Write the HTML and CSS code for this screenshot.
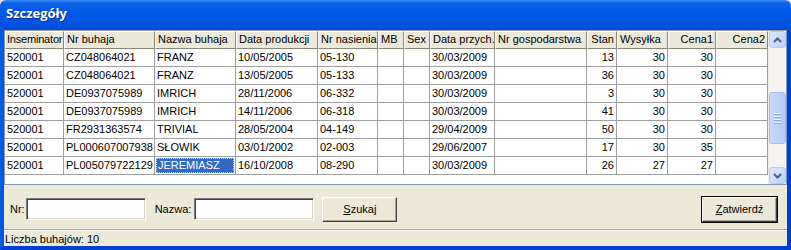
FILE: index.html
```html
<!DOCTYPE html>
<html>
<head>
<meta http-equiv="Content-Type" content="text/html;charset=UTF-8">
<link rel="stylesheet" href="styles.css">
</head>
<body>
<div class="window">
  <div class="titleBar"><span class="titleText">Szczegóły</span></div>
  <div class="client">
    <div class="gridWrapper">
      <div class="gridBody">
        <div class="gridRow headRow">
          <div class="cell firstHead">Inseminator</div>
          <div class="cell">Nr buhaja</div>
          <div class="cell">Nazwa buhaja</div>
          <div class="cell">Data produkcji</div>
          <div class="cell">Nr nasienia</div>
          <div class="cell">MB</div>
          <div class="cell">Sex</div>
          <div class="cell">Data przych.</div>
          <div class="cell">Nr gospodarstwa</div>
          <div class="cell num">Stan</div>
          <div class="cell">Wysyłka</div>
          <div class="cell num">Cena1</div>
          <div class="cell num">Cena2</div>
        </div>
        <div class="gridRow">
          <div class="cell">520001</div><div class="cell">CZ048064021</div><div class="cell">FRANZ</div><div class="cell">10/05/2005</div><div class="cell">05-130</div><div class="cell"></div><div class="cell"></div><div class="cell">30/03/2009</div><div class="cell"></div><div class="cell num">13</div><div class="cell num">30</div><div class="cell num">30</div><div class="cell"></div>
        </div>
        <div class="gridRow">
          <div class="cell">520001</div><div class="cell">CZ048064021</div><div class="cell">FRANZ</div><div class="cell">13/05/2005</div><div class="cell">05-133</div><div class="cell"></div><div class="cell"></div><div class="cell">30/03/2009</div><div class="cell"></div><div class="cell num">36</div><div class="cell num">30</div><div class="cell num">30</div><div class="cell"></div>
        </div>
        <div class="gridRow">
          <div class="cell">520001</div><div class="cell">DE0937075989</div><div class="cell">IMRICH</div><div class="cell">28/11/2006</div><div class="cell">06-332</div><div class="cell"></div><div class="cell"></div><div class="cell">30/03/2009</div><div class="cell"></div><div class="cell num">3</div><div class="cell num">30</div><div class="cell num">30</div><div class="cell"></div>
        </div>
        <div class="gridRow">
          <div class="cell">520001</div><div class="cell">DE0937075989</div><div class="cell">IMRICH</div><div class="cell">14/11/2006</div><div class="cell">06-318</div><div class="cell"></div><div class="cell"></div><div class="cell">30/03/2009</div><div class="cell"></div><div class="cell num">41</div><div class="cell num">30</div><div class="cell num">30</div><div class="cell"></div>
        </div>
        <div class="gridRow">
          <div class="cell">520001</div><div class="cell">FR2931363574</div><div class="cell">TRIVIAL</div><div class="cell">28/05/2004</div><div class="cell">04-149</div><div class="cell"></div><div class="cell"></div><div class="cell">29/04/2009</div><div class="cell"></div><div class="cell num">50</div><div class="cell num">30</div><div class="cell num">30</div><div class="cell"></div>
        </div>
        <div class="gridRow">
          <div class="cell">520001</div><div class="cell">PL000607007938</div><div class="cell">SŁOWIK</div><div class="cell">03/01/2002</div><div class="cell">02-003</div><div class="cell"></div><div class="cell"></div><div class="cell">29/06/2007</div><div class="cell"></div><div class="cell num">17</div><div class="cell num">30</div><div class="cell num">35</div><div class="cell"></div>
        </div>
        <div class="gridRow">
          <div class="cell">520001</div><div class="cell">PL005079722129</div><div class="cell selected"><span class="focusRect">JEREMIASZ</span></div><div class="cell">16/10/2008</div><div class="cell">08-290</div><div class="cell"></div><div class="cell"></div><div class="cell">30/03/2009</div><div class="cell"></div><div class="cell num">26</div><div class="cell num">27</div><div class="cell num">27</div><div class="cell"></div>
        </div>
      </div>
      <div class="scrollBar">
        <div class="sbButton">
          <svg width="9" height="6" viewBox="0 0 9 6"><path d="M1 5 L4.5 1.5 L8 5" fill="none" stroke="#4d6185" stroke-width="2"/></svg>
        </div>
        <div class="sbTrack">
          <div class="sbThumb">
            <div class="grip"></div><div class="grip"></div><div class="grip"></div><div class="grip"></div>
          </div>
        </div>
        <div class="sbButton">
          <svg width="9" height="6" viewBox="0 0 9 6"><path d="M1 1 L4.5 4.5 L8 1" fill="none" stroke="#4d6185" stroke-width="2"/></svg>
        </div>
      </div>
    </div>
    <div class="searchPanel">
      <span class="label">Nr:</span>
      <input class="textBox" type="text">
      <span class="label nameLabel">Nazwa:</span>
      <input class="textBox" type="text">
      <button class="btn searchBtn"><u>S</u>zukaj</button>
      <button class="btn defaultBtn"><u>Z</u>atwierdź</button>
    </div>
    <div class="statusBar">Liczba buhajów: 10</div>
  </div>
</div>
</body>
</html>
```

FILE: styles.css
```css
html, body{
  margin: 0;
  padding: 0;
  background: #ece9d8;
}
.window{
  width: 791px;
  height: 250px;
  display: flex;
  flex-direction: column;
  font-family: "Liberation Sans", Arial, sans-serif;
  font-size: 11px;
  color: #000;
}
.titleBar{
  height: 30px;
  box-sizing: border-box;
  padding: 4px 0 0 6px;
  background: linear-gradient(#3d8ff7 0, #0c63ea 3px, #0058e8 40%, #0053e0 85%, #004bd6 100%);
  border-radius: 6px 6px 0 0;
}
.titleText{
  font-family: "Open Sans", "DejaVu Sans", sans-serif;
  font-weight: bold;
  font-size: 13px;
  color: #fff;
  text-shadow: 1px 1px 0 #0a2a9a;
}
.client{
  flex: 1;
  display: flex;
  flex-direction: column;
  border-left: 4px solid #0058e6;
  border-right: 4px solid #0040d0;
  border-bottom: 4px solid #0040d0;
  background: #ece9d8;
}
.gridWrapper{
  height: 155px;
  box-sizing: border-box;
  display: flex;
  border: 1px solid #7f9db9;
  border-top-color: #a0a0a0;
  background: #fff;
}
.gridBody{
  flex: 1;
  overflow: hidden;
}
.gridRow{
  display: grid;
  grid-template-columns: 59px 91px 81px 82px 60px 26px 26px 65px 92px 30px 51px 48px 1fr;
  height: 18px;
}
.cell{
  box-sizing: border-box;
  border-right: 1px solid #a0a0a0;
  border-bottom: 1px solid #a0a0a0;
  padding: 2px 2px 0 2px;
  white-space: nowrap;
  overflow: hidden;
}
.num{
  text-align: right;
}
.headRow .cell{
  background: #ebe9da;
  border-right: 1px solid #8a8878;
  border-bottom: 1px solid #8a8878;
  border-top: 1px solid #fff;
  border-left: 1px solid #fff;
  padding-top: 1px;
}
.headRow .firstHead{
  padding-left: 1px;
  padding-right: 0;
  letter-spacing: -0.2px;
}
.selected{
  padding: 1px 1px 0 1px;
}
.focusRect{
  display: block;
  height: 15px;
  box-sizing: border-box;
  background: #316ac5;
  color: #fff;
  border: 1px dotted #bcd0f0;
  padding: 0 0 0 1px;
}
.scrollBar{
  width: 17px;
  display: flex;
  flex-direction: column;
  background: #f4f3ee;
  border-left: 1px solid #eeede5;
}
.sbButton{
  height: 17px;
  box-sizing: border-box;
  border: 1px solid #b7caf5;
  border-radius: 3px;
  background: linear-gradient(135deg, #dfe8fe, #bccffa);
  display: flex;
  align-items: center;
  justify-content: center;
}
.sbTrack{
  flex: 1;
  padding-top: 44px;
}
.sbThumb{
  height: 52px;
  box-sizing: border-box;
  border: 1px solid #a8bef0;
  border-radius: 3px;
  background: linear-gradient(90deg, #c9d8fc, #b6cbf9);
  display: flex;
  flex-direction: column;
  align-items: center;
  justify-content: center;
  gap: 1px;
}
.grip{
  width: 7px;
  height: 1px;
  background: #eef3fe;
  border-bottom: 1px solid #8ca9e8;
}
.searchPanel{
  height: 44px;
  box-sizing: border-box;
  display: flex;
  align-items: center;
  padding: 4px 10px 0 6px;
}
.label{
  margin-right: 1px;
}
.nameLabel{
  margin-left: 9px;
  margin-right: 3px;
}
.textBox{
  width: 120px;
  height: 22px;
  box-sizing: border-box;
  margin: 0;
  border: 1px solid;
  border-color: #808080 #fff #fff #808080;
  box-shadow: inset 1px 1px 0 #404040, inset -1px -1px 0 #d4d0c8;
  background: #fff;
}
.btn{
  width: 75px;
  height: 25px;
  box-sizing: border-box;
  margin: 0;
  font-family: "Liberation Sans", Arial, sans-serif;
  font-size: 11px;
  color: #000;
  background: #ece9d8;
  border: 1px solid;
  border-color: #fff #404040 #404040 #fff;
  box-shadow: inset -1px -1px 0 #aca899;
  padding: 0;
}
.searchBtn{
  margin-left: 8px;
}
.defaultBtn{
  margin-left: auto;
  outline: 1px solid #000;
  border-color: #fff #404040 #404040 #fff;
}
.statusBar{
  height: 17px;
  box-sizing: border-box;
  border-top: 1px solid #aca899;
  box-shadow: inset 0 1px 0 #fff;
  padding: 3px 0 0 1px;
}
```
